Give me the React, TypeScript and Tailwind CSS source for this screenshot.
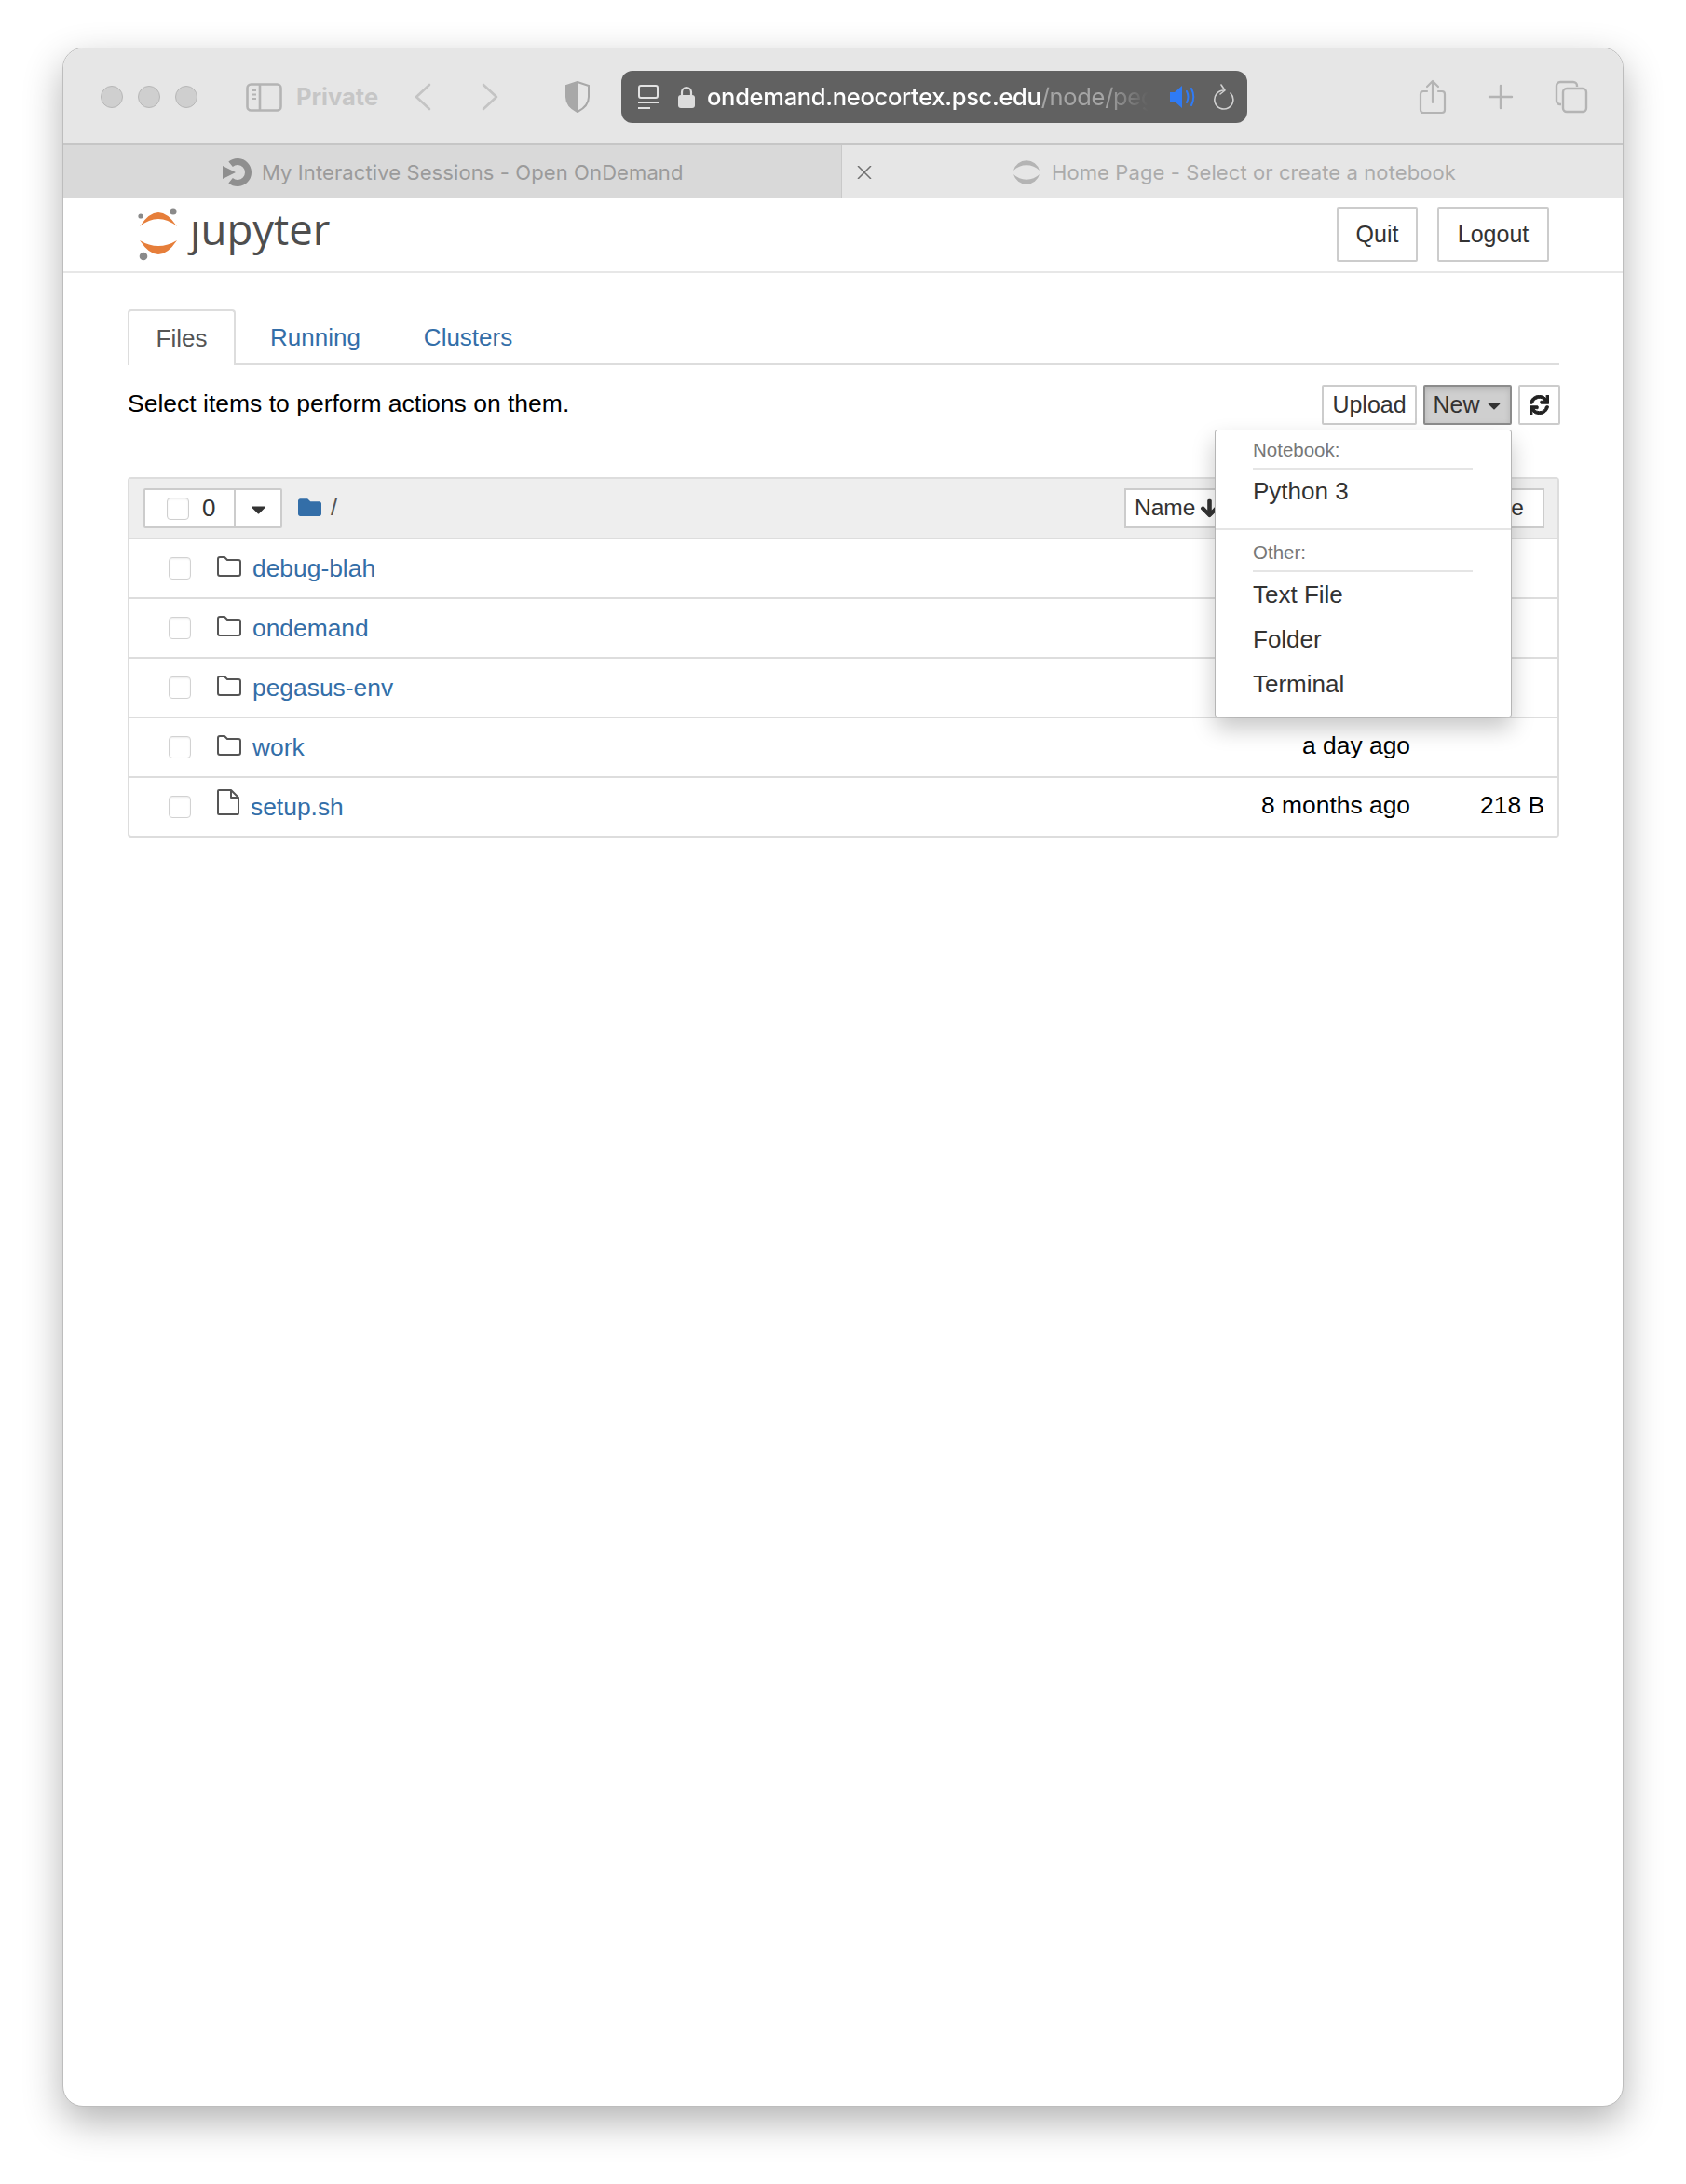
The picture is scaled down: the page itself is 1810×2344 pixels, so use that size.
import React from 'react';
import { FaArrowDown, FaCaretDown, FaFolder, FaSync } from 'react-icons/fa';

const ROWS = [
  { name: 'debug-blah', kind: 'folder' },
  { name: 'ondemand', kind: 'folder' },
  { name: 'pegasus-env', kind: 'folder' },
  { name: 'work', kind: 'folder', modified: 'a day ago' },
  { name: 'setup.sh', kind: 'file', modified: '8 months ago', size: '218 B' },
];

export default function App() {
  return (
    <div className="min-h-[2344px] bg-white pt-[51px] pl-[67px] font-['Liberation_Sans',Arial,sans-serif] text-[26px]">
      <div className="w-[1676px] h-[2210px] rounded-[22px] overflow-hidden border border-[#bdbdbd] bg-white flex flex-col shadow-[0_16px_42px_rgba(0,0,0,0.3)]">
        <Toolbar />
        <TabStrip />
        <Header />
        <Main />
      </div>
    </div>
  );
}

// ─── Browser chrome ───────────────────────────────────────────────────────────

function Toolbar() {
  return (
    <div className="h-[104px] shrink-0 bg-[#e6e6e6] border-b-2 border-[#c6c6c6] flex items-center pl-[40px] pt-[2px] text-[#bdbdbd]">
      <div className="flex gap-[16px]">
        <span className="w-[24px] h-[24px] rounded-full bg-[#cfcfcf] border border-[#b7b7b7]" />
        <span className="w-[24px] h-[24px] rounded-full bg-[#cfcfcf] border border-[#b7b7b7]" />
        <span className="w-[24px] h-[24px] rounded-full bg-[#cfcfcf] border border-[#b7b7b7]" />
      </div>
      <svg className="ml-[52px]" width="39" height="31" viewBox="0 0 39 31" fill="none" stroke="#b4b4b4" strokeWidth="2.6">
        <rect x="1.5" y="1.5" width="36" height="28" rx="4" />
        <path d="M15 2v27" />
        <path d="M6 8h5M6 12.5h5M6 17h5" strokeWidth="1.8" />
      </svg>
      <span className="ml-[15px] w-[90px] text-[25.5px] font-bold text-[#c6c6c6] font-['Inter',sans-serif]">Private</span>
      <svg className="ml-[36px]" width="20" height="30" viewBox="0 0 20 30" fill="none" stroke="#c4c4c4" strokeWidth="2.6" strokeLinecap="round" strokeLinejoin="round">
        <path d="M17 2 3 15l14 13" />
      </svg>
      <svg className="ml-[52px]" width="20" height="30" viewBox="0 0 20 30" fill="none" stroke="#c4c4c4" strokeWidth="2.6" strokeLinecap="round" strokeLinejoin="round">
        <path d="M3 2l14 13L3 28" />
      </svg>
      <svg className="ml-[70px]" width="28" height="34" viewBox="0 0 28 34">
        <path d="M14 1 2 5v12c0 8 6 13 12 16 6-3 12-8 12-16V5L14 1Z" fill="none" stroke="#a8a8a8" strokeWidth="2" />
        <path d="M14 1 2 5v12c0 8 6 13 12 16V1Z" fill="#a8a8a8" />
      </svg>
      <AddressBar />
      <svg className="ml-[184px]" width="30" height="38" viewBox="0 0 30 38" fill="none" stroke="#b4b4b4" strokeWidth="2.2" strokeLinecap="round" strokeLinejoin="round">
        <path d="M9 13H5a3 3 0 0 0-3 3v17a3 3 0 0 0 3 3h20a3 3 0 0 0 3-3V16a3 3 0 0 0-3-3h-4" />
        <path d="M15 25V2M9 8l6-6 6 6" />
      </svg>
      <svg className="ml-[44px]" width="28" height="28" viewBox="0 0 28 28" fill="none" stroke="#b4b4b4" strokeWidth="2.4" strokeLinecap="round">
        <path d="M14 2v24M2 14h24" />
      </svg>
      <svg className="ml-[44px]" width="36" height="36" viewBox="0 0 36 36" fill="none" stroke="#b4b4b4" strokeWidth="2.4">
        <path d="M7 26H6a4 4 0 0 1-4-4V6a4 4 0 0 1 4-4h14a4 4 0 0 1 4 4v1" />
        <rect x="9" y="9" width="25" height="25" rx="4" />
      </svg>
    </div>
  );
}

function AddressBar() {
  return (
    <div className="ml-[33px] w-[672px] h-[56px] rounded-[12px] bg-[#616161] flex items-center pl-[17px]">
      <svg width="24" height="28" viewBox="0 0 24 28" fill="none" stroke="#e2e2e2" strokeWidth="2">
        <rect x="2" y="2" width="20" height="13" rx="2" />
        <path d="M1 20h22M1 26h13" />
      </svg>
      <svg className="ml-[19px]" width="20" height="24" viewBox="0 0 20 24">
        <path d="M5 11V7a5 5 0 0 1 10 0v4" fill="none" stroke="#dcdcdc" strokeWidth="2.2" />
        <rect x="1" y="10" width="18" height="14" rx="3" fill="#dcdcdc" />
      </svg>
      <div className="ml-[12px] w-[474px] overflow-hidden whitespace-nowrap font-['Inter',sans-serif] text-[25.5px] font-medium text-white tracking-[-0.3px] [mask-image:linear-gradient(to_right,black_90%,transparent)]">
        ondemand.neocortex.psc.edu<span className="font-normal text-[#a5a5a5]">/node/pegasus</span>
      </div>
      <svg className="ml-[22px]" width="30" height="26" viewBox="0 0 30 26" fill="none">
        <path d="M1 8h5l8-7v24l-8-7H1V8Z" fill="#2f7bf6" />
        <path d="M19 7c2 4 2 8 0 12M24 4c3 6 3 12 0 18" stroke="#2f7bf6" strokeWidth="2" strokeLinecap="round" />
      </svg>
      <svg className="ml-[17px]" width="24" height="30" viewBox="0 0 24 30" fill="none" stroke="#d0d0d0" strokeWidth="1.6" strokeLinecap="round" strokeLinejoin="round">
        <path d="M19 11a10 10 0 1 1-7-3" />
        <path d="M9 2l4 6-5 4" />
      </svg>
    </div>
  );
}

function TabStrip() {
  return (
    <div className="h-[57px] shrink-0 flex bg-[#e6e6e6] border-b border-[#d4d4d4] font-['Inter',sans-serif] text-[22px]">
      <div className="w-[836px] h-full bg-[#d9d9d9] border-r border-[#c9c9c9] flex items-center pl-[171px] pt-[2px] text-[#9b9b9b] tracking-[0.1px] whitespace-nowrap">
        <svg width="32" height="32" viewBox="0 0 32 32" fill="none">
          <path d="M8.6 7.2A11.5 11.5 0 1 1 8.6 24.8" stroke="#8f8f8f" strokeWidth="7" />
          <path d="M0 9l14 7-14 7V9Z" fill="#8f8f8f" />
        </svg>
        <span className="ml-[10px]">My Interactive Sessions - Open OnDemand</span>
      </div>
      <div className="flex-1 flex items-center pl-[16px] pt-[2px] text-[#ababab] tracking-[0.1px] whitespace-nowrap">
        <svg width="16" height="14" viewBox="0 0 16 14" stroke="#707070" strokeWidth="1.5">
          <path d="M1 0l14 14M15 0 1 14" />
        </svg>
        <svg className="ml-[151px]" width="30" height="30" viewBox="0 0 30 30" fill="#b4b4b4">
          <path d="M1 13A14.5 14.5 0 0 1 29 13 20 20 0 0 0 1 13Z" />
          <path d="M1 17A14.5 14.5 0 0 0 29 17 20 20 0 0 1 1 17Z" />
        </svg>
        <span className="ml-[12px]">Home Page - Select or create a notebook</span>
      </div>
    </div>
  );
}

// ─── Jupyter page ─────────────────────────────────────────────────────────────

function Header() {
  return (
    <div className="h-[80px] shrink-0 border-b-2 border-[#e7e7e7] flex items-start pt-[9px] pl-[78px] pr-[79px]">
      <svg width="50" height="60" viewBox="0 0 50 60" fill="#e67e3a">
        <path d="M4 21Q24 -9 44 21 24 5 4 21Z" />
        <path d="M4 36Q24 66 44 36 24 48 4 36Z" />
        <circle cx="5" cy="10" r="2.6" fill="#8a8a8a" />
        <circle cx="40" cy="5" r="3.6" fill="#8a8a8a" />
        <circle cx="8" cy="53" r="4.3" fill="#8a8a8a" />
      </svg>
      <span className="relative ml-[8px] -mt-[7px] font-['Open_Sans',sans-serif] text-[45.5px] leading-[60px] text-[#4e4e4e]">
        jupyter
        {/* logo j has no dot */}
        <span className="absolute left-0 top-[9px] w-[12px] h-[13px] bg-white" />
      </span>
      <div className="ml-auto flex gap-[21px] text-[25px]">
        <HeaderButton label="Quit" width="w-[87px]" />
        <HeaderButton label="Logout" width="w-[120px]" />
      </div>
    </div>
  );
}

function HeaderButton({ label, width }: { label: string; width: string }) {
  return (
    <button className={`${width} h-[59px] bg-white border-2 border-[#cccccc] text-[#333333] rounded-[2px]`}>{label}</button>
  );
}

function Main() {
  return (
    <div className="relative flex-1 pl-[69px] pr-[68px] pt-[39px]">
      <div className="flex h-[60px] border-b-2 border-[#dddddd] text-[#336ea8]">
        <div className="w-[116px] h-[60px] bg-white border-2 border-b-0 border-[#dddddd] rounded-t-[4px] flex items-center justify-center text-[#555555]">Files</div>
        <div className="ml-[37px] h-[60px] flex items-center">Running</div>
        <div className="ml-[68px] h-[60px] flex items-center">Clusters</div>
      </div>
      <div className="flex items-start h-[120px] pt-[21px] -mr-[1px]">
        <p className="pt-[5px] text-black text-[26.5px] leading-[30px]">Select items to perform actions on them.</p>
        <div className="ml-auto flex gap-[7px] text-[25px]">
          <button className="w-[102px] h-[43px] bg-white border-2 border-[#cccccc] text-[#333333] rounded-[2px]">Upload</button>
          <button className="w-[95px] h-[43px] bg-[#cfcfcf] border-2 border-[#8c8c8c] text-[#333333] rounded-[2px] flex items-center justify-center gap-[4px] pl-[2px] shadow-[inset_0_3px_6px_rgba(0,0,0,0.125)]">
            New <FaCaretDown className="shrink-0" size={22} />
          </button>
          <button className="w-[45px] h-[43px] bg-white border-2 border-[#cccccc] text-[#222222] rounded-[2px] flex items-center justify-center">
            <FaSync size={21} stroke="currentColor" strokeWidth={24} />
          </button>
        </div>
      </div>
      <div className="border-2 border-[#dddddd] rounded-[4px]">
        <div className="h-[65px] bg-[#eeeeee] flex items-center pl-[15px] pr-[14px] border-b-2 border-[#dddddd]">
          <div className="w-[149px] h-[43px] flex bg-white border-2 border-[#cccccc] rounded-[2px] text-[#333333]">
            <div className="w-[97px] border-r-2 border-[#cccccc] flex items-center pl-[23px]">
              <span className="w-[24px] h-[24px] rounded-[4px] border border-[#cfcfcf] bg-white shadow-[inset_0_1px_2px_rgba(0,0,0,0.08)]" />
              <span className="ml-[14px]">0</span>
            </div>
            <div className="flex-1 flex items-center justify-center">
              <FaCaretDown className="mt-[2px]" size={25} />
            </div>
          </div>
          <FaFolder className="ml-[17px] -mt-[3px] text-[#336ea8]" size={25} />
          <span className="ml-[10px] -mt-[3px] text-[#555555]">/</span>
          <div className="ml-auto flex gap-[6px] text-[#333333] text-[24.5px]">
            <button className="w-[100px] h-[43px] bg-white border-2 border-[#cccccc] flex items-center pl-[9px] gap-[5px] whitespace-nowrap overflow-hidden">
              Name <FaArrowDown className="shrink-0" size={21} stroke="currentColor" strokeWidth={30} />
            </button>
            <button className="w-[167px] h-[43px] bg-white border-2 border-[#cccccc] whitespace-nowrap">Last Modified</button>
            <button className="w-[172px] h-[43px] bg-white border-2 border-[#cccccc] whitespace-nowrap text-right pr-[20px]">File size</button>
          </div>
        </div>
        {ROWS.map((row, idx) => (
          <FileRow key={row.name} row={row} last={idx === ROWS.length - 1} />
        ))}
      </div>
      <NewMenu />
    </div>
  );
}

function FileRow({ row, last }: { row: typeof ROWS[number] & { modified?: string; size?: string }; last: boolean }) {
  return (
    <div className={`flex items-center pl-[42px] pr-[14px] text-[26.4px] ${last ? 'h-[62px]' : 'h-[64px] border-b-2 border-[#dddddd]'}`}>
      <span className="w-[24px] h-[24px] rounded-[4px] border border-[#d2d2d2] bg-white shadow-[inset_0_1px_2px_rgba(0,0,0,0.08)]" />
      {row.kind === 'folder' ? (
        <svg className="ml-[28px] -mt-[4px]" width="26" height="22" viewBox="0 0 26 22" fill="none" stroke="#555555" strokeWidth="2" strokeLinejoin="round">
          <path d="M1 3a2 2 0 0 1 2-2h5l3 3h12a2 2 0 0 1 2 2v13a2 2 0 0 1-2 2H3a2 2 0 0 1-2-2V3Z" />
        </svg>
      ) : (
        <svg className="ml-[28px] -mt-[10px]" width="24" height="28" viewBox="0 0 24 28" fill="none" stroke="#555555" strokeWidth="2" strokeLinejoin="round">
          <path d="M1 2a1 1 0 0 1 1-1h13l8 8v17a1 1 0 0 1-1 1H2a1 1 0 0 1-1-1V2Z" />
          <path d="M15 1v8h8" />
        </svg>
      )}
      <a className="ml-[12px] mt-[2px] text-[#336ea8]">{row.name}</a>
      <span className="ml-auto -mt-[3px] text-black">{row.modified}</span>
      <span className="w-[144px] -mt-[3px] text-right text-black">{row.size}</span>
    </div>
  );
}

function NewMenu() {
  return (
    <div className="absolute left-[1236px] top-[168px] w-[319px] h-[309px] bg-white border border-[#b5b5b5] rounded-[3px] shadow-[0_12px_24px_rgba(0,0,0,0.22)] text-[#333333] pt-[2px]">
      <MenuHeader label="Notebook:" />
      <div className="-mt-[1px]">
        <MenuItem label="Python 3" />
      </div>
      <div className="mt-[16px] h-[2px] bg-[#e5e5e5]" />
      <div className="mt-[5px]">
        <MenuHeader label="Other:" />
      </div>
      <MenuItem label="Text File" />
      <MenuItem label="Folder" />
      <MenuItem label="Terminal" />
    </div>
  );
}

function MenuHeader({ label }: { label: string }) {
  return (
    <div className="ml-[40px] mr-[41px] h-[40px] border-b-2 border-[#e5e5e5] flex items-center text-[20.5px] text-[#777777]">{label}</div>
  );
}

function MenuItem({ label }: { label: string }) {
  return <div className="ml-[40px] h-[48px] flex items-center">{label}</div>;
}
